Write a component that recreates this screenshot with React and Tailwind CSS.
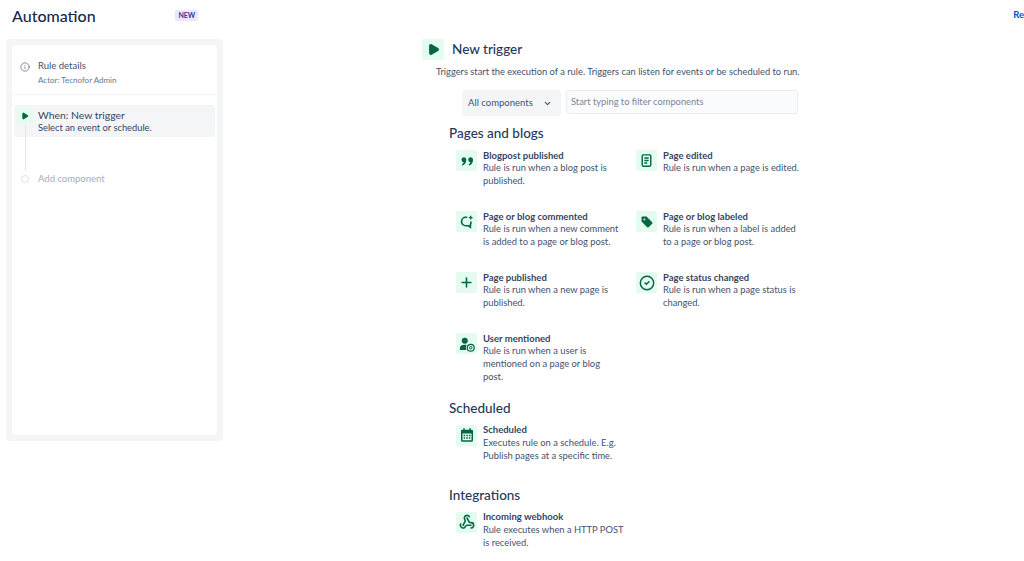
import React from 'react';
import { ChevronDown, Info, Play, Plus, CircleCheck, Webhook } from 'lucide-react';

const QuoteIcon = () => (
    <svg viewBox="0 0 24 24" className="w-[18px] h-[18px]" fill="#006644">
        <path d="M7.500 7a3.500 3.500 0 0 1 3.500 3.500c0 3.500-2 6-5 7.500l-.9-1.400c1.300-.8 2.200-1.800 2.500-2.700A3.500 3.500 0 0 1 7.500 7zM16.500 7a3.500 3.500 0 0 1 3.500 3.500c0 3.500-2 6-5 7.500l-.9-1.400c1.300-.8 2.200-1.800 2.500-2.700A3.500 3.500 0 0 1 16.500 7z" />
    </svg>
);

const PageIcon = () => (
    <svg viewBox="0 0 24 24" className="w-[17px] h-[17px]" fill="none" stroke="#006644" strokeWidth="2">
        <rect x="6" y="4" width="12" height="16" rx="1.500" />
        <path d="M9 8.500h6M9 12h6M9 15.500h4" />
    </svg>
);

const CommentIcon = () => (
    <svg viewBox="0 0 24 24" className="w-[17px] h-[17px]" fill="none" stroke="#006644" strokeWidth="2.400">
        <path d="M13 6H11a6 6 0 0 0 0 12h3.500l3 2v-3.500a6 6 0 0 0 .5-4.500" />
        <path d="M18 4v5M15.500 6.500h5" strokeWidth="1.800" />
    </svg>
);

const TagIcon = () => (
    <svg viewBox="0 0 24 24" className="w-[17px] h-[17px]" fill="#006644">
        <path d="M5 6.500A1.500 1.500 0 0 1 6.500 5H12l8 8a1.400 1.400 0 0 1 0 2l-5 5a1.400 1.400 0 0 1-2 0l-8-8V6.500z" />
        <circle cx="9" cy="9" r="1.400" fill="#e3fcef" />
    </svg>
);

const UserAtIcon = () => (
    <svg viewBox="0 0 24 24" className="w-[18px] h-[18px]" fill="#006644">
        <circle cx="9" cy="7.500" r="4" />
        <path d="M2.500 20v-2.500C2.500 14.500 5 13 9 13c1 0 1.800.1 2.600.3A6 6 0 0 0 11 20H2.500z" />
        <circle cx="17" cy="17" r="4.600" fill="none" stroke="#006644" strokeWidth="1.600" />
        <circle cx="17" cy="17" r="1.700" fill="none" stroke="#006644" strokeWidth="1.300" />
    </svg>
);

const CalendarIcon = () => (
    <svg viewBox="0 0 24 24" className="w-[18px] h-[18px]" fill="#006644">
        <path d="M7 3h2v2h6V3h2v2h1.500A1.500 1.500 0 0 1 20 6.500V19a2 2 0 0 1-2 2H6a2 2 0 0 1-2-2V6.500A1.500 1.500 0 0 1 5.500 5H7V3z" />
        <rect x="6" y="10" width="12" height="9" fill="#e3fcef" />
        <path d="M7.500 11.500h2v2h-2zM11 11.500h2v2h-2zM14.500 11.500h2v2h-2zM7.500 15h2v2h-2zM11 15h2v2h-2zM14.500 15h2v2h-2z" />
    </svg>
);

const sections = [
    {
        title: 'Pages and blogs',
        items: [
            { icon: <QuoteIcon />, name: 'Blogpost published', text: 'Rule is run when a blog post is published.' },
            { icon: <PageIcon />, name: 'Page edited', text: 'Rule is run when a page is edited.' },
            { icon: <CommentIcon />, name: 'Page or blog commented', text: 'Rule is run when a new comment is added to a page or blog post.' },
            { icon: <TagIcon />, name: 'Page or blog labeled', text: 'Rule is run when a label is added to a page or blog post.' },
            { icon: <Plus size={15} strokeWidth={2.5} color="#006644" />, name: 'Page published', text: 'Rule is run when a new page is published.' },
            { icon: <CircleCheck size={16} strokeWidth={2.2} color="#006644" />, name: 'Page status changed', text: 'Rule is run when a page status is changed.' },
            { icon: <UserAtIcon />, name: 'User mentioned', text: 'Rule is run when a user is mentioned on a page or blog post.', textClass: 'w-[130px]' },
        ],
    },
    {
        title: 'Scheduled',
        items: [
            { icon: <CalendarIcon />, name: 'Scheduled', text: 'Executes rule on a schedule. E.g. Publish pages at a specific time.' },
        ],
    },
    {
        title: 'Integrations',
        items: [
            { icon: <Webhook size={16} strokeWidth={2.4} color="#006644" />, name: 'Incoming webhook', text: 'Rule executes when a HTTP POST is received.', textClass: 'w-[146px]' },
        ],
    },
];

const TriggerItem = ({ icon, name, text, textClass = 'w-[140px]' }) => (
    <div className="flex gap-[6px] w-[180px] min-h-[61px] pb-[14.500px]">
        <div className="w-[21px] h-[21px] rounded-[2px] bg-[#e3fcef] flex items-center justify-center shrink-0">{icon}</div>
        <div className={`${textClass} pt-[0.500px] text-[9.350px] leading-[13px] text-[#42526e]`}>
            <div className="font-bold leading-[10.500px] text-[9.500px] text-[#344563]">{name}</div>
            <div>{text}</div>
        </div>
    </div>
);

export default function App() {
    return (
        <div className="w-[1024px] h-[561px] overflow-hidden bg-white font-['Lato',sans-serif]">
            {/* HEADER */}
            <header className="h-[39px] flex items-center pb-[8px]">
                <h1 className="w-[163px] ml-3 text-[16px] font-medium text-[#172b4d]">Automation</h1>
                <span className="w-[23px] h-[11px] ml-[3px] rounded-[2px] bg-[#eae6ff] text-[#403294] text-[7px] font-bold flex items-center justify-center">NEW</span>
                <span className="ml-[815px] text-[9.500px] font-bold text-[#0052cc] shrink-0">Re</span>
            </header>

            <div className="flex">
                {/* SIDEBAR */}
                <aside className="w-[217px] h-[402px] ml-[6px] p-[6px] rounded-[4px] bg-[#f4f5f7] shrink-0">
                    <div className="h-full rounded-[4px] bg-white px-[2px]">
                        <div className="h-[50px] flex items-start gap-[8px] pl-[6px] pt-[15px] border-b border-[#f1f2f4]">
                            <Info size={10} color="#6b778c" className="mt-[2px]" />
                            <div>
                                <div className="text-[9.500px] leading-[12px] text-[#42526e]">Rule details</div>
                                <div className="text-[8px] leading-[12px] mt-[2px] text-[#6b778c]">Actor: Tecnofor Admin</div>
                            </div>
                        </div>
                        <div className="relative mt-[10px] h-[32px] rounded-[3px] bg-[#f4f5f7] flex gap-[5px] pl-[3px]">
                            <div className="w-[16px] h-[16px] mt-[3px] bg-[#e3fcef] rounded-[2px] flex items-center justify-center">
                                <Play size={8} fill="#006644" color="#006644" />
                            </div>
                            <div>
                                <div className="text-[10.400px] leading-[14px] mt-[3px] text-[#344563]">When: New trigger</div>
                                <div className="text-[9.300px] leading-[12px] text-[#344563]">Select an event or schedule.</div>
                            </div>
                        </div>
                        <div className="flex gap-[5px] pl-[7px] mt-[35px] items-center relative">
                            <div className="absolute left-[10.500px] top-[-47px] h-[45px] w-[1.500px] bg-[#e4e6ea]"></div>
                            <div className="w-[8px] h-[8px] rounded-full border border-[#dfe1e6] mr-[4px]"></div>
                            <div className="text-[9.500px] text-[#a5adba]">Add component</div>
                        </div>
                    </div>
                </aside>

                {/* TRIGGER PICKER */}
                <main className="ml-[199px] w-[400px] shrink-0">
                    <div className="flex items-center gap-2">
                        <div className="w-[22px] h-[21px] bg-[#e3fcef] rounded-[2px] flex items-center justify-center">
                            <Play size={13} fill="#006644" color="#006644" />
                        </div>
                        <h2 className="text-[13.500px] font-medium text-[#253858]">New trigger</h2>
                    </div>
                    <p className="ml-[14px] mt-[5px] text-[9.300px] leading-[13px] text-[#42526e] whitespace-nowrap">Triggers start the execution of a rule. Triggers can listen for events or be scheduled to run.</p>
                    <div className="flex gap-[5px] ml-[40px] mt-[12px]">
                        <div className="w-[99px] h-[26px] bg-[#f4f5f7] rounded-[3px] flex items-center justify-between pl-[6px] pr-[9px] text-[9.500px] text-[#42526e]">
                            All components
                            <ChevronDown size={9} strokeWidth={3} />
                        </div>
                        <div className="w-[232px] h-[24px] bg-[#fafbfc] border border-[#ebecf0] rounded-[3px] flex items-center pl-[4px] text-[9.300px] text-[#7a869a]">Start typing to filter components</div>
                    </div>
                    <div className="ml-[27px] mt-[7px]">
                        {sections.map((section) => (
                            <section key={section.title} className="last:-mt-px">
                                <h3 className="text-[13.500px] leading-[20px] font-medium text-[#253858] mb-[7px]">{section.title}</h3>
                                <div className="grid grid-cols-[180px_180px] ml-[7px]">
                                    {section.items.map((item) => (
                                        <TriggerItem key={item.name} {...item} />
                                    ))}
                                </div>
                            </section>
                        ))}
                    </div>
                </main>
            </div>
        </div>
    );
}
